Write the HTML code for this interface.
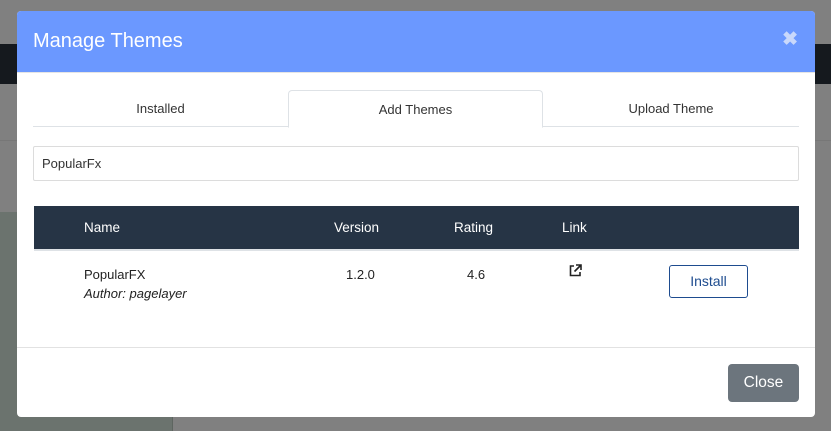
<!DOCTYPE html>
<html><head><style>
*{box-sizing:border-box;margin:0;padding:0}
body{width:831px;height:431px;background:#808080;font-family:"Liberation Sans",sans-serif;position:relative;overflow:hidden}
.dark{position:absolute;left:0;top:44px;width:831px;height:40px;background:#15191e}
.line1{position:absolute;left:0;top:140px;width:831px;height:1px;background:#777}
.gpanel{position:absolute;left:0;top:212px;width:173px;height:219px;background:#6b736e;border-right:1px solid #5e6560}
.modal{position:absolute;left:17px;top:11px;width:798px;height:406px;background:#fff;border-radius:4px;overflow:hidden}
.hd{height:62px;background:#6b98ff;color:#fff;font-size:20px;padding:19px 0 0 16px;position:relative;border-bottom:1px solid #e5e5e5}
.x{position:absolute;right:17px;top:17px;color:#c9d8fb;font-size:19px;font-weight:bold}
.tabs{position:absolute;top:79px;left:16px;width:766px;height:37px;border-bottom:1px solid #dee2e6}
.tab{position:absolute;top:0;height:37px;font-size:13px;color:#333;text-align:center;line-height:38px}
.act{border:1px solid #dee2e6;border-bottom:1px solid #fff;border-radius:4px 4px 0 0;background:#fff;height:38px}
.inp{position:absolute;top:135px;left:16px;width:766px;height:35px;border:1px solid #dcdcdc;border-radius:2px;font-size:13px;color:#333;padding:9px 8px}
.th{position:absolute;top:195px;left:17px;width:765px;height:45px;background:#263445;color:#fff;font-size:13.5px;border-bottom:2px solid #dee2e6}
.th span,.row span{position:absolute;top:14px}
.row{position:absolute;top:241px;left:17px;width:765px;height:80px;font-size:13px;color:#222}
.btn{position:absolute;left:635px;top:13px;width:79px;height:33px;border:1px solid #1e4c8f;border-radius:3px;color:#1e4c8f;font-size:14px;text-align:center;line-height:31px}
.ft{position:absolute;top:336px;left:0;width:798px;height:1px;background:#e2e2e2}
.close{position:absolute;left:711px;top:353px;width:71px;height:38px;background:#6c757d;color:#fff;border-radius:4px;font-size:15.5px;text-align:center;line-height:38px}
</style></head><body>
<div class="dark"></div><div class="line1"></div><div class="gpanel"></div>
<div class="modal">
<div class="hd">Manage Themes<span class="x">✖</span></div>
<div class="tabs">
<div class="tab" style="left:0;width:255px">Installed</div>
<div class="tab act" style="left:255px;width:255px">Add Themes</div>
<div class="tab" style="left:510px;width:256px">Upload Theme</div>
</div>
<div class="inp">PopularFx</div>
<div class="th"><span style="left:50px">Name</span><span style="left:300px">Version</span><span style="left:420px">Rating</span><span style="left:528px">Link</span></div>
<div class="row">
<span style="left:50px;top:15px">PopularFX</span>
<span style="left:50px;top:34px;font-style:italic">Author: pagelayer</span>
<span style="left:312px;top:15px">1.2.0</span>
<span style="left:433px;top:15px">4.6</span>
<svg style="position:absolute;left:535px;top:12px" width="13" height="13" viewBox="0 0 13 13"><path d="M5 2H1.5v9.5H11V8" fill="none" stroke="#222" stroke-width="1.6"/><path d="M7 1h5v5M12 1L5.5 7.5" fill="none" stroke="#222" stroke-width="1.6"/></svg>
<div class="btn">Install</div>
</div>
<div class="ft"></div>
<div class="close">Close</div>
</div>
</body></html>
